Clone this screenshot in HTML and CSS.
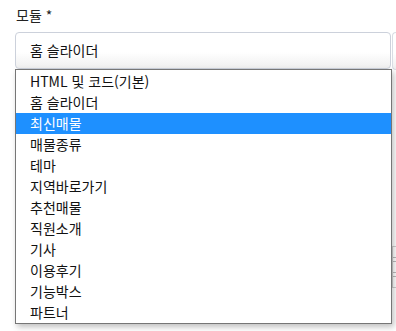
FILE: index.html
```html
<!doctype html>
<html lang="ko">
<head>
    <meta charset="UTF-8">
    <title>모듈 선택</title>
    <link rel="stylesheet" href="styles.css">
</head>
<body>
    <div class="form--row">
        <div class="form--field">
            <label class="form--label">모듈 *</label>
            <div class="select--box">홈 슬라이더</div>
        </div>
        <div class="form--side">
            <div class="side--box"></div>
            <div class="side--editor">
                <div class="editor--bar"></div>
                <div class="editor--bar"></div>
            </div>
        </div>
    </div>

    <ul class="select--list">
        <li class="option">HTML 및 코드(기본)</li>
        <li class="option">홈 슬라이더</li>
        <li class="option selected">최신매물</li>
        <li class="option">매물종류</li>
        <li class="option">테마</li>
        <li class="option">지역바로가기</li>
        <li class="option">추천매물</li>
        <li class="option">직원소개</li>
        <li class="option">기사</li>
        <li class="option">이용후기</li>
        <li class="option">기능박스</li>
        <li class="option">파트너</li>
    </ul>
</body>
</html>
```

FILE: styles.css
```css
body {
    margin: 0;
    background: #ffffff;
    font-family: "Noto Sans CJK KR", "Noto Sans", sans-serif;
    font-size: 14px;
    color: #222222;
}

.form--row {
    display: flex;
    gap: 1px;
    padding-left: 15px;
}

.form--field {
    width: 376px;
    flex: none;
}

.form--label {
    display: block;
    height: 20px;
    line-height: 20px;
    padding: 5px 0 7px 1px;
    color: #222222;
}

.select--box {
    height: 35px;
    line-height: 35px;
    padding-left: 14px;
    border: 1px solid #ccd1db;
    border-radius: 4px;
    color: #111111;
    background: linear-gradient(#ffffff 55%, #efefef);
}

.form--side {
    flex: 1;
    padding-top: 32px;
}

.side--box {
    height: 36px;
    border: 1px solid #d9dde4;
    border-right: none;
    border-radius: 4px 0 0 4px;
    background: linear-gradient(#ffffff 55%, #efefef);
}

.side--editor {
    margin-top: 176px;
    height: 40px;
    border: 1px solid #cfcfcf;
    border-right: none;
}

.editor--bar {
    height: 3px;
    margin-top: 10px;
    border-top: 1px solid #bbbbbb;
    border-bottom: 1px solid #bbbbbb;
}

.select--list {
    position: absolute;
    top: 69px;
    left: 15px;
    width: 375px;
    margin: 0;
    padding: 1px 0 0;
    list-style: none;
    background: #ffffff;
    border: 1px solid #767676;
    box-shadow: 2px 3px 6px rgba(0, 0, 0, 0.25);
}

.option {
    height: 21px;
    line-height: 21px;
    padding-left: 14px;
    color: #111111;
}

.option.selected {
    background: #1e90ff;
    color: #ffffff;
}
```
